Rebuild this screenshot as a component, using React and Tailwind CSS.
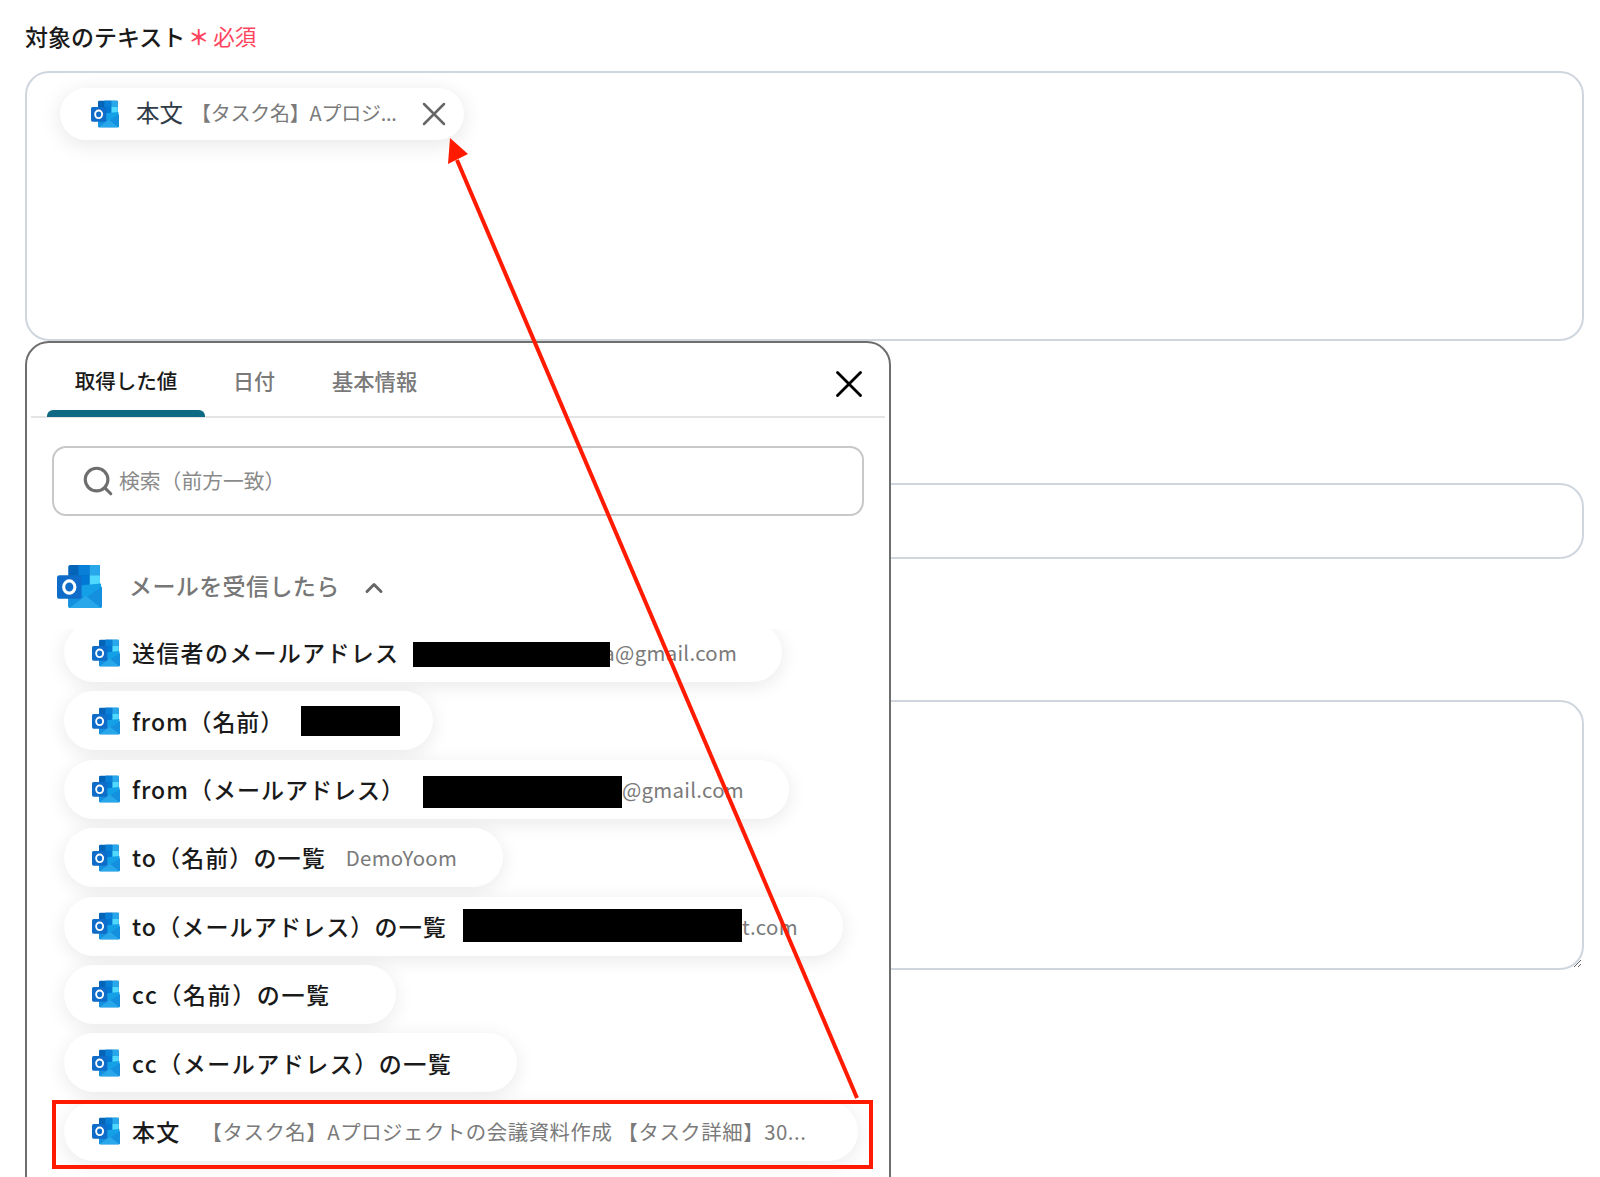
import { Search, X, ChevronUp } from 'lucide-react';

const FONT = "font-['Noto_Sans_CJK_JP','Noto_Sans',sans-serif]";

function OutlookIcon({ className }) {
    return (
        <svg viewBox="0 0 44 44" className={className}>
            <rect x="11" y="1" width="31" height="30" rx="2" fill="#0364b8" />
            <rect x="21" y="1" width="11" height="10" fill="#0a7fd8" />
            <rect x="32" y="1" width="10" height="10" fill="#28a8ea" />
            <rect x="21" y="11" width="11" height="10" fill="#0078d4" />
            <rect x="32" y="11" width="10" height="10" fill="#50d9ff" />
            <path d="M11 22 L43 19 L44 41 Q44 43 42 43 L13 43 Q11 43 11 41 Z" fill="#14a0e6" />
            <path d="M11 24 L28 33 L44 22 L44 41 Q44 43 42 43 L13 43 Q11 43 11 41 Z" fill="#1490df" />
            <path d="M12 43 L28 31 L43 43 Z" fill="#28a8ea" />
            <rect x="0" y="11" width="24" height="23" rx="2.5" fill="#0f6cc8" />
            <ellipse cx="12" cy="22.5" rx="5.5" ry="6" fill="none" stroke="#fff" strokeWidth="3" />
        </svg>
    );
}

function Redact({ w, h, top = 0 }) {
    return <span style={{ width: w, height: h, marginTop: top }} className="relative z-10 inline-block shrink-0 bg-black" />;
}

function Chip({ w, label, gap = 0, tracking = 'tracking-[1.3px]', children }) {
    return (
        <div
            style={{ width: w }}
            className="flex h-[59px] shrink-0 items-center rounded-full bg-white pl-[28px] shadow-[0_4px_20px_rgba(0,0,0,0.09)]"
        >
            <OutlookIcon className="h-[28px] w-[28px] shrink-0" />
            <span className={`ml-[12px] whitespace-nowrap text-[23px] font-medium text-[#1a1a1a] ${tracking}`}>{label}</span>
            <div style={{ marginLeft: gap }} className="flex items-center whitespace-nowrap text-[20.4px] tracking-[0.3px] text-[#7a7a7a]">
                {children}
            </div>
        </div>
    );
}

export default function App() {
    return (
        <div className={`${FONT} relative h-[1177px] w-full overflow-hidden bg-white`}>
            <div className="flex flex-col pl-[25px] pr-[16px]">
                {/* form fields behind the popup */}
                <div className="flex h-[71px] items-center pt-[2px] text-[23px] font-medium text-[#1a1a1a]">
                    対象のテキスト
                    <span className="ml-[3px] text-[21px] font-bold text-[#ff4560]">＊</span>
                    <span className="ml-[4px] text-[21.5px] font-normal text-[#ff4560]">必須</span>
                </div>
                <div className="h-[270px] rounded-[24px] border-2 border-[#cfd6de] pl-[33px] pt-[15px]">
                    <div className="flex h-[52px] w-[404px] items-center rounded-full bg-white pl-[31px] shadow-[0_4px_22px_rgba(0,0,0,0.10)]">
                        <OutlookIcon className="h-[28px] w-[28px] shrink-0" />
                        <span className="ml-[17px] -mt-[3px] text-[23.5px] text-[#2f3b47]">本文</span>
                        <span className="ml-[8px] -mt-[3px] w-[207px] whitespace-nowrap text-[20px] tracking-[-0.25px] text-[#7a7a7a]">【タスク名】Aプロジ...</span>
                        <X className="ml-[16px] h-[40px] w-[40px] shrink-0 text-[#666666]" strokeWidth={1.5} />
                    </div>
                </div>
                <div className="mt-[142px] h-[76px] rounded-[24px] border-2 border-[#cfd6de]" />
                <textarea readOnly className="mt-[141px] block h-[270px] w-full rounded-[24px] border-2 border-[#cfd6de] outline-none" />
            </div>

            {/* popup */}
            <div className="absolute left-[25px] top-[341px] h-[900px] w-[866px] rounded-[24px] border-2 border-[#6e6e6e] bg-white">
                <div className="relative mx-[4px] flex h-[75px] items-center border-b-2 border-[#e4e4e4] pl-[16px]">
                    <div className="relative flex h-full w-[158px] items-center justify-center pt-[2px] text-[20.5px] font-medium text-[#1a1a1a]">
                        取得した値
                        <span className="absolute bottom-[-1px] left-0 h-[7px] w-[158px] rounded-t-[6px] bg-[#0e6a82]" />
                    </div>
                    <div className="ml-[28px] pt-[2px] text-[21px] font-medium text-[#7a7a7a]">日付</div>
                    <div className="ml-[57px] pt-[2px] text-[21.3px] font-medium text-[#7a7a7a]">基本情報</div>
                    <X className="absolute right-[13px] top-[18px] h-[46px] w-[46px] text-black" strokeWidth={1.5} />
                </div>
                <div className="ml-[25px] mt-[28px] flex h-[70px] w-[812px] items-center rounded-[14px] border-2 border-[#c8c8c8] pl-[27px]">
                    <Search className="h-[34px] w-[34px] text-[#6e6e6e]" strokeWidth={2.2} />
                    <span className="ml-[4px] text-[20.8px] text-[#8a8a8a]">検索（前方一致）</span>
                </div>
                <div className="ml-[30px] mt-[47px] flex h-[46px] items-center">
                    <OutlookIcon className="h-[45px] w-[45px] shrink-0" />
                    <span className="-mt-[2px] ml-[27px] text-[23px] font-medium tracking-[0.4px] text-[#777777]">メールを受信したら</span>
                    <ChevronUp className="ml-[20px] mt-[3px] h-[28px] w-[28px] text-[#666666]" strokeWidth={2.5} />
                </div>
                <div className="mt-[20px] h-[600px] overflow-hidden pl-[37px]">
                    <div className="-mt-[6px] flex flex-col gap-[9.4px]">
                        <Chip w={718} label="送信者のメールアドレス" gap={14}>
                            <Redact w={197} h={25} top={5} />
                            <span className="-ml-[7px]">a@gmail.com</span>
                        </Chip>
                        <Chip w={369} label="from（名前）" tracking="tracking-[0.9px]" gap={17}>
                            <Redact w={99} h={30} top={1} />
                        </Chip>
                        <Chip w={725} label="from（メールアドレス）" tracking="tracking-[1px]" gap={18}>
                            <Redact w={199} h={32} top={5} />
                            <span>@gmail.com</span>
                        </Chip>
                        <Chip w={439} label="to（名前）の一覧" tracking="tracking-[1.1px]" gap={20}>
                            <span>DemoYoom</span>
                        </Chip>
                        <Chip w={779} label="to（メールアドレス）の一覧" tracking="tracking-[1.15px]" gap={16}>
                            <Redact w={279} h={33} top={-1} />
                            <span>t.com</span>
                        </Chip>
                        <Chip w={332} label="cc（名前）の一覧" tracking="tracking-[1.6px]" />
                        <Chip w={453} label="cc（メールアドレス）の一覧" tracking="tracking-[1.5px]" />
                        <Chip w={794} label="本文" gap={21}>
                            <span className="tracking-[0.55px]">【タスク名】Aプロジェクトの会議資料作成 【タスク詳細】30...</span>
                        </Chip>
                    </div>
                </div>
            </div>

            {/* annotation drawn over the screenshot */}
            <svg className="pointer-events-none absolute inset-0 z-20" width="1600" height="1177">
                <line x1="857" y1="1098" x2="457" y2="160" stroke="#ff1a00" strokeWidth="4" />
                <polygon points="450,138 468,154 448,164" fill="#ff1a00" />
                <rect x="54" y="1102" width="817" height="65" fill="none" stroke="#ff1a00" strokeWidth="4" />
            </svg>
        </div>
    );
}
